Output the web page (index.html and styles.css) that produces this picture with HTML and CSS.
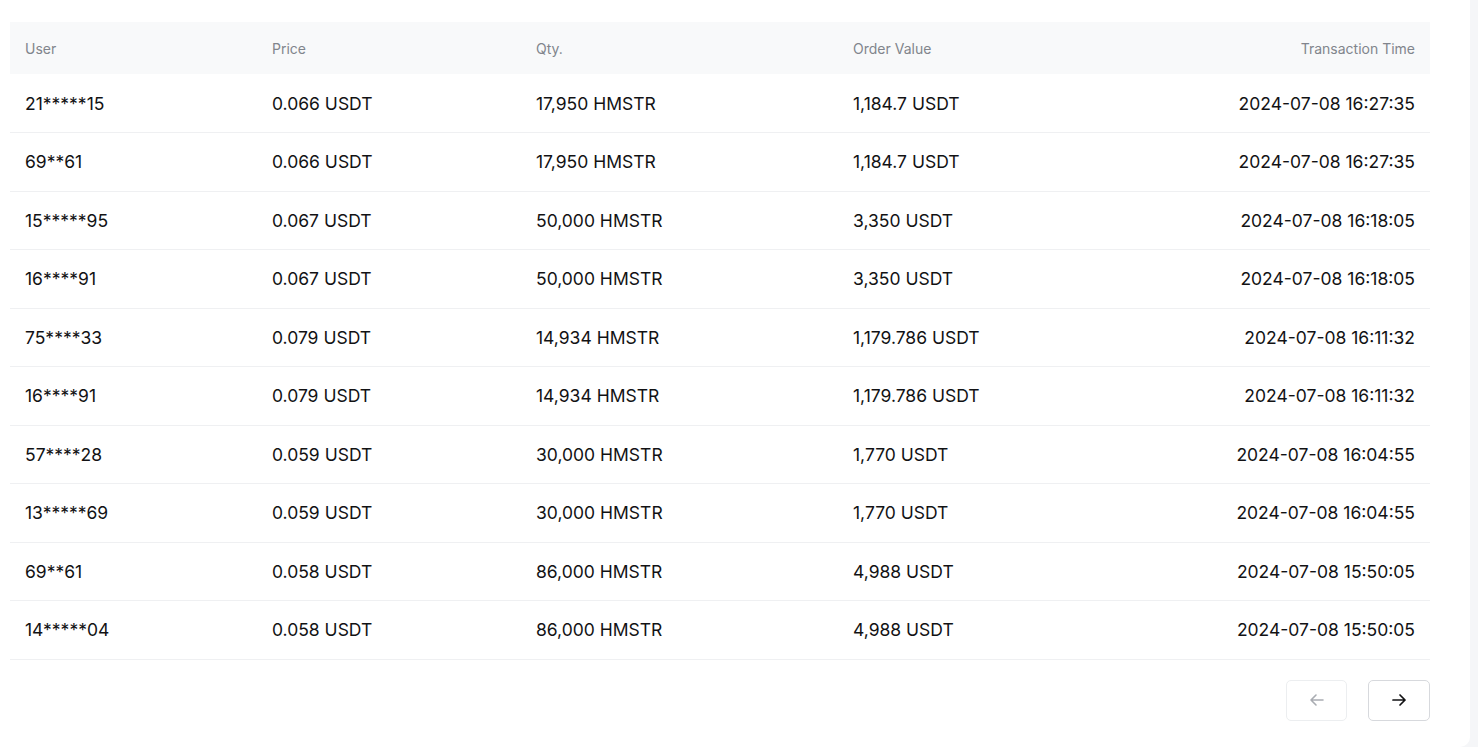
FILE: index.html
```html
<!DOCTYPE html>
<html lang="en">
<head>
<meta charset="utf-8">
<title>Trades</title>
<link rel="stylesheet" href="styles.css">
</head>
<body>
<div class="card">
  <table class="trades">
    <colgroup>
      <col class="c-user"><col class="c-price"><col class="c-qty"><col class="c-val"><col class="c-time">
    </colgroup>
    <thead>
      <tr><th>User</th><th>Price</th><th>Qty.</th><th>Order Value</th><th class="r">Transaction Time</th></tr>
    </thead>
    <tbody>
      <tr><td>21*****15</td><td>0.066 USDT</td><td>17,950 HMSTR</td><td>1,184.7 USDT</td><td class="r">2024-07-08 16:27:35</td></tr>
      <tr><td>69**61</td><td>0.066 USDT</td><td>17,950 HMSTR</td><td>1,184.7 USDT</td><td class="r">2024-07-08 16:27:35</td></tr>
      <tr><td>15*****95</td><td>0.067 USDT</td><td>50,000 HMSTR</td><td>3,350 USDT</td><td class="r">2024-07-08 16:18:05</td></tr>
      <tr><td>16****91</td><td>0.067 USDT</td><td>50,000 HMSTR</td><td>3,350 USDT</td><td class="r">2024-07-08 16:18:05</td></tr>
      <tr><td>75****33</td><td>0.079 USDT</td><td>14,934 HMSTR</td><td>1,179.786 USDT</td><td class="r">2024-07-08 16:11:32</td></tr>
      <tr><td>16****91</td><td>0.079 USDT</td><td>14,934 HMSTR</td><td>1,179.786 USDT</td><td class="r">2024-07-08 16:11:32</td></tr>
      <tr><td>57****28</td><td>0.059 USDT</td><td>30,000 HMSTR</td><td>1,770 USDT</td><td class="r">2024-07-08 16:04:55</td></tr>
      <tr><td>13*****69</td><td>0.059 USDT</td><td>30,000 HMSTR</td><td>1,770 USDT</td><td class="r">2024-07-08 16:04:55</td></tr>
      <tr><td>69**61</td><td>0.058 USDT</td><td>86,000 HMSTR</td><td>4,988 USDT</td><td class="r">2024-07-08 15:50:05</td></tr>
      <tr><td>14*****04</td><td>0.058 USDT</td><td>86,000 HMSTR</td><td>4,988 USDT</td><td class="r">2024-07-08 15:50:05</td></tr>
    </tbody>
  </table>
  <div class="pager">
    <button class="pg disabled" aria-label="Previous">
      <svg width="16" height="16" viewBox="0 0 16 16" fill="none" stroke="currentColor" stroke-width="1.6" stroke-linecap="round" stroke-linejoin="round"><path d="M14 8H2M7 3L2 8l5 5"/></svg>
    </button>
    <button class="pg" aria-label="Next">
      <svg width="16" height="16" viewBox="0 0 16 16" fill="none" stroke="currentColor" stroke-width="1.7" stroke-linecap="round" stroke-linejoin="round"><path d="M2 8h12M9 3l5 5-5 5"/></svg>
    </button>
  </div>
</div>
</body>
</html>
```
FILE: styles.css
```css
html, body {
  margin: 0;
  padding: 0;
}
body {
  background: #f5f6f8;
  font-family: Inter, "Noto Sans", Arial, sans-serif;
  color: #121214;
  overflow: hidden;
}
.card {
  width: 1470px;
  height: 747px;
  background: #ffffff;
  border-bottom-right-radius: 10px;
  box-sizing: border-box;
  padding: 22px 40px 0 10px;
}
.trades {
  width: 1420px;
  border-collapse: collapse;
  table-layout: fixed;
}
.c-user { width: 247px; }
.c-price { width: 264px; }
.c-qty { width: 317px; }
.c-val { width: 300px; }
.c-time { width: auto; }
.trades th {
  height: 52px;
  background: #f8f9fa;
  font-weight: 400;
  font-size: 14px;
  color: #81858c;
  text-align: left;
  padding: 0 15px;
  vertical-align: middle;
}
.trades td {
  height: 58.5px;
  box-sizing: border-box;
  border-bottom: 1px solid #eff0f2;
  font-size: 17.5px;
  padding: 0 15px;
  vertical-align: middle;
  white-space: nowrap;
}
.trades .r { text-align: right; }
.pager {
  width: 1420px;
  display: flex;
  justify-content: flex-end;
  gap: 21px;
  margin-top: 20px;
}
.pg {
  width: 62px;
  height: 41px;
  box-sizing: border-box;
  background: #fff;
  border: 1px solid #d7d9dd;
  border-radius: 5px;
  display: flex;
  align-items: center;
  justify-content: center;
  color: #121214;
  padding: 0;
}
.pg.disabled {
  width: 61px;
  border-color: #eceef0;
  color: #a9acb2;
}
```
